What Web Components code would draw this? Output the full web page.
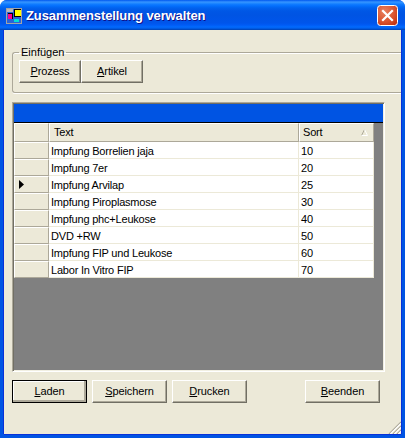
<!DOCTYPE html>
<html lang="de"><head><meta charset="utf-8"><title>Zusammenstellung verwalten</title>
<style>
html,body{margin:0;padding:0;background:#fff;width:405px;height:438px;overflow:hidden}
body{font:11px/13px "Liberation Sans",Arial,sans-serif;color:#000}
u{text-decoration:underline;text-underline-offset:1px}
</style></head><body>
<xp-window heading="Zusammenstellung verwalten">
  <xp-group label="Einfügen">
    <xp-button width="62"><u>P</u>rozess</xp-button>
    <xp-button width="62"><u>A</u>rtikel</xp-button>
  </xp-group>
  <xp-grid></xp-grid>
  <xp-actions>
    <xp-button width="75" default><u>L</u>aden</xp-button>
    <xp-button width="75"><u>S</u>peichern</xp-button>
    <xp-button width="75"><u>D</u>rucken</xp-button>
    <xp-button width="75" slot="end"><u>B</u>eenden</xp-button>
  </xp-actions>
</xp-window>
<script>
class XpWindow extends HTMLElement{
  constructor(){super();const s=this.attachShadow({mode:'open'});
  s.innerHTML=`<style>
  :host{display:flex;flex-direction:column;width:405px;height:438px;box-sizing:border-box;background:#0054e3;border-radius:7px 7px 0 0;overflow:hidden;position:relative}
  .bar{flex:none;height:30px;box-sizing:border-box;display:flex;align-items:center;padding:2px 7px 0 6px;gap:4px;
    background:linear-gradient(#0058ee 0,#3593ff 2px,#288eff 3px,#127dff 4px,#036ffc 6px,#0262ee 8px,#0057e5 11px,#0054e3 15px,#0055eb 23px,#005bf5 25px,#026afe 27px,#0062ef 28px,#0052d6 29px,#0040ab 30px);}
  .icon{flex:none;width:16px;height:16px;display:block}
  h1{flex:1;margin:0;font:bold 13px/16px "Liberation Sans",Arial,sans-serif;letter-spacing:-.1px;color:#fff;text-shadow:1px 1px #0f1089;white-space:nowrap}
  .close{flex:none;display:block;width:21px;height:21px;margin-top:-1px}
  .client{flex:1;min-height:0;margin:0 4px 4px 4px;background:#ece9d8;display:flex;flex-direction:column;position:relative;
    box-shadow:-1px 0 #0831d9,1px 0 #0831d9,0 1px #0831d9}
  .grip{position:absolute;right:0;bottom:0;width:13px;height:13px;display:block}
  </style>
  <div class="bar">
    <svg class="icon" viewBox="0 0 16 16" shape-rendering="crispEdges">
      <rect width="16" height="16" fill="#a4a4a4"/>
      <rect x="1" y="1" width="14" height="14" fill="#2b63d8"/>
      <rect x="1" y="1" width="6" height="3" fill="#b8b8b8"/>
      <rect x="8" y="1" width="7" height="8" fill="#000"/>
      <rect x="9" y="2" width="6" height="6" fill="#ffff00"/>
      <rect x="2" y="5" width="5" height="6" fill="#000"/>
      <rect x="2" y="6" width="4" height="5" fill="#ff0090"/>
      <rect x="8" y="11" width="5" height="3" fill="#00e0d8"/>
    </svg>
    <h1></h1>
    <svg class="close" viewBox="0 0 21 21">
      <defs><radialGradient id="r" cx=".35" cy=".3" r=".85"><stop offset="0" stop-color="#e8805f"/><stop offset=".6" stop-color="#d9532e"/><stop offset="1" stop-color="#c0300f"/></radialGradient></defs>
      <rect x=".5" y=".5" width="20" height="20" rx="3" fill="url(#r)" stroke="#fff"/>
      <path d="M6 6l9 9M15 6l-9 9" stroke="#fff" stroke-width="2.2" stroke-linecap="square" fill="none"/>
    </svg>
  </div>
  <div class="client"><slot></slot>
    <svg class="grip" viewBox="0 0 13 13">
      <g stroke-width="1.2"><path d="M13 1L1 13M13 5L5 13M13 9L9 13" stroke="#aca899"/><path d="M13 2.4L2.4 13M13 6.4L6.4 13M13 10.4L10.4 13" stroke="#fff"/></g></svg>
  </div>`;
  s.querySelector('h1').textContent=this.getAttribute('heading');}
}
class XpGroup extends HTMLElement{
  constructor(){super();const s=this.attachShadow({mode:'open'});
  s.innerHTML=`<style>
  :host{display:block;margin:15px 0 0 8px}
  fieldset{margin:0;padding:2px 0 0 6px;border:1px solid #aca899;border-right:0;border-radius:3px 0 0 3px;box-shadow:0 1px #fff,inset 0 1px #fff;height:48px;box-sizing:border-box;min-width:0}
  legend{margin-left:0;padding:1px 2px 0;font-size:11px;line-height:13px}
  .row{display:flex;margin-top:-1px}
  </style><fieldset><legend></legend><div class="row"><slot></slot></div></fieldset>`;
  s.querySelector('legend').textContent=this.getAttribute('label');}
}
class XpButton extends HTMLElement{
  constructor(){super();const s=this.attachShadow({mode:'open'});
  s.innerHTML=`<style>
  :host{display:flex;flex:none;box-sizing:border-box;height:23px;align-items:center;justify-content:center;background:#ece9d8;font-size:11px;letter-spacing:-.1px;white-space:nowrap;
    border:1px solid;border-color:#fff #716f64 #716f64 #fff;box-shadow:inset -1px -1px #aca899;padding-bottom:1px}
  :host([default]){border:1px solid #000;box-shadow:inset -2px -2px #aca899,inset 1px 1px #fff}
  </style><slot></slot>`;
  this.style.width=(this.getAttribute('width')||75)+'px';}
}
class XpGrid extends HTMLElement{
  constructor(){super();const s=this.attachShadow({mode:'open'});
  const rows=[['Impfung Borrelien jaja','10'],['Impfung 7er','20'],['Impfung Arvilap','25',1],['Impfung Piroplasmose','30'],['Impfung phc+Leukose','40'],['DVD +RW','50'],['Impfung FIP und Leukose','60'],['Labor In Vitro FIP','70']];
  s.innerHTML=`<style>
  :host{display:flex;flex-direction:column;box-sizing:border-box;margin:9px 16px 0 8px;height:270px;background:#808080;
    border:1px solid;border-color:#aca899 #fff #fff #aca899;box-shadow:inset 1px 1px #716f64,inset -1px -1px #f1efe2;padding:1px;font-size:11px;letter-spacing:-.2px}
  .caption{flex:none;height:19px;background:#0054e3;border-bottom:1px solid #000;box-sizing:border-box}
  .table{display:grid;grid-template-columns:35px 250px 75px;grid-template-rows:19px;grid-auto-rows:17px;width:360px}
  .table>div{box-sizing:border-box;display:flex;align-items:center;white-space:nowrap;overflow:hidden}
  .table>.h{background:#ece9d8;border:1px solid;border-color:#fff #aca899 #aca899 #fff;padding-left:4px;position:relative}
  .table>.h.s{padding-left:3px}
  .table>.hr{background:#ece9d8;border:1px solid;border-color:#fff #aca899 #aca899 #fff;padding-left:4px}
  .table>.c{background:#fff;border-right:1px solid #ece9d8;border-bottom:1px solid #ece9d8;padding:2px 0 0 2px}
  .sort{position:absolute;right:5px;top:5px;width:7px;height:7px;display:block}
  .mark{display:block;width:5px;height:9px}
  </style>
  <div class="caption"></div>
  <div class="table">
    <div class="h"></div><div class="h">Text</div>
    <div class="h s">Sort<svg class="sort" viewBox="0 0 7 7"><path d="M3.5 .5L.5 6.5" stroke="#aca899" fill="none"/><path d="M3.5 .5L6.5 6.5H.5" stroke="#fff" fill="none"/></svg></div>
    ${rows.map(r=>`<div class="hr">${r[2]?'<svg class="mark" viewBox="0 0 5 9"><path d="M0 0L5 4.5L0 9z" fill="#000"/></svg>':''}</div><div class="c">${r[0]}</div><div class="c">${r[1]}</div>`).join('')}
  </div>`;}
}
class XpActions extends HTMLElement{
  constructor(){super();const s=this.attachShadow({mode:'open'});
  s.innerHTML=`<style>
  :host{display:flex;margin:8px 21px 0 8px;justify-content:space-between}
  .l{display:flex;gap:5px}
  </style><div class="l"><slot></slot></div><slot name="end"></slot>`;}
}
customElements.define('xp-window',XpWindow);
customElements.define('xp-group',XpGroup);
customElements.define('xp-button',XpButton);
customElements.define('xp-grid',XpGrid);
customElements.define('xp-actions',XpActions);
</script>
</body></html>
